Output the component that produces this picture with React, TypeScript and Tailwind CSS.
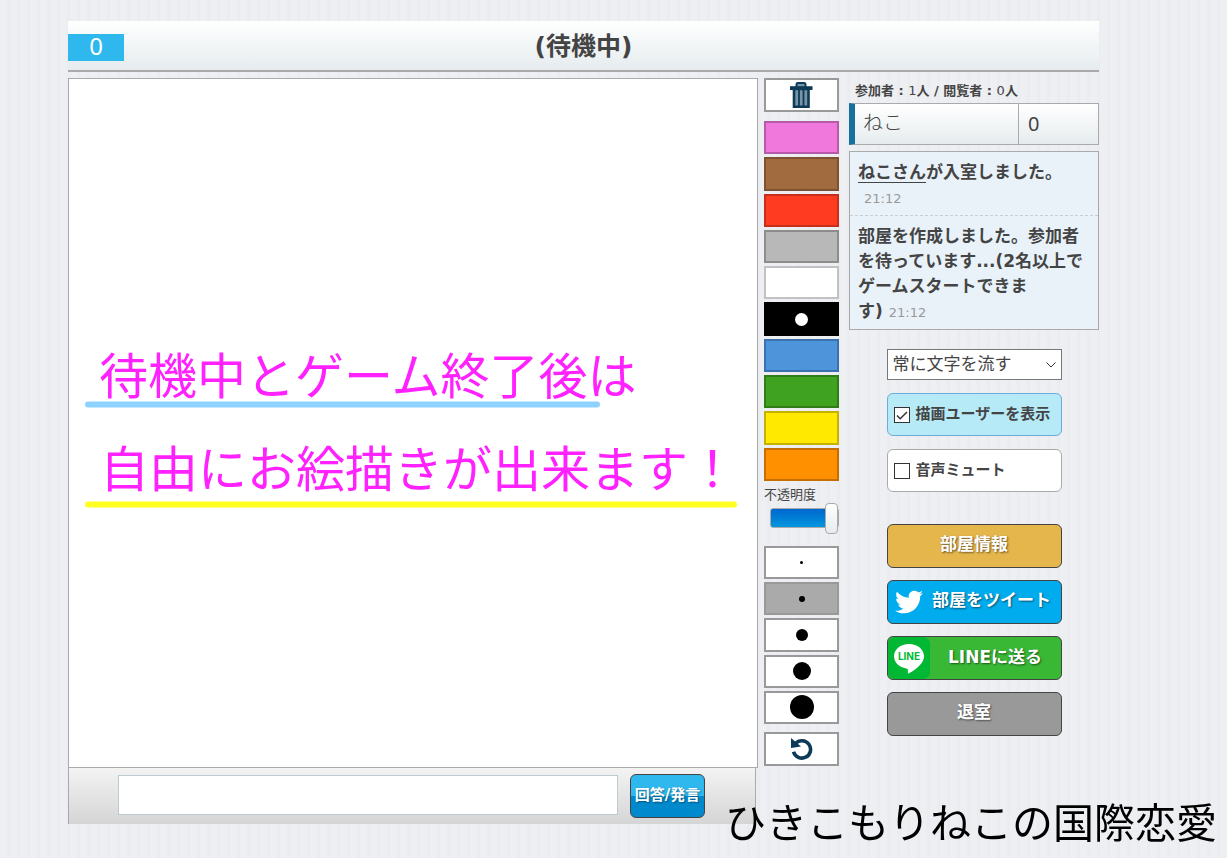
import { FaTwitter } from "react-icons/fa";

type Swatch = {
  label: string;
  className: string;
  selected?: boolean;
};

const swatches: Swatch[] = [
  { label: "ピンク", className: "border-[#b75aa8] bg-[#f078dc]" },
  { label: "茶", className: "border-[#7d5231] bg-[#a26b3f]" },
  { label: "赤", className: "border-[#c62f1b] bg-[#ff3c22]" },
  { label: "灰", className: "border-[#8d8d8d] bg-[#b8b8b8]" },
  { label: "白", className: "border-[#c2c2c2] bg-white" },
  { label: "黒", className: "border-black bg-black", selected: true },
  { label: "青", className: "border-[#3c71af] bg-[#4e94db]" },
  { label: "緑", className: "border-[#307d18] bg-[#3fa220]" },
  { label: "黄", className: "border-[#c4b200] bg-[#ffe900]" },
  { label: "橙", className: "border-[#c66f00] bg-[#ff9100]" },
];

const brushes = [
  { size: 3, dot: "size-[3px]", background: "bg-white" },
  { size: 6, dot: "size-[6px]", background: "bg-[#aaa]" },
  { size: 12, dot: "size-[12px]", background: "bg-white" },
  { size: 18, dot: "size-[18px]", background: "bg-white" },
  { size: 24, dot: "size-[24px]", background: "bg-white" },
];

export default function App() {
  return (
    <div className="min-h-screen bg-[repeating-linear-gradient(90deg,#eeeff3_0,#eeeff3_7px,#ebecf0_7px,#ebecf0_10px)] pt-[21px] pr-32 pl-[68px] font-['DejaVu_Sans','Noto_Sans_CJK_JP',sans-serif] text-[#444]">
      <header className="grid h-[51px] grid-cols-[1fr_auto_1fr] items-center border-b-2 border-[#aaa] bg-linear-to-b from-white to-[#e6ecee]">
        <span className="mt-1 flex h-[27px] w-14 items-center justify-center bg-[#2eb8ee] pb-1 font-['Noto_Sans',sans-serif] text-2xl text-white">0</span>
        <h1 className="pt-0.5 text-[25px] leading-[47px] font-bold">(待機中)</h1>
      </header>

      <main className="mt-1.5 flex items-start">
        <div className="min-w-0 flex-1">
          <DrawingCanvas />
          <AnswerForm />
        </div>
        <Toolbar />
        <Sidebar />
      </main>

      <p className="fixed right-2.5 bottom-2 font-['Noto_Sans_CJK_JP',sans-serif] text-[41px] leading-[60px] text-black">
        ひきこもりねこの国際恋愛
      </p>
    </div>
  );
}

function DrawingCanvas() {
  return (
    <section className="aspect-square border border-[#aaa] bg-white">
      <svg className="size-full" viewBox="0 0 688 688" role="img" aria-label="お絵描きキャンバス">
        <g fill="#ff22ff" fontFamily="Noto Sans CJK JP, sans-serif" fontSize="49">
          <text x="30" y="315">待機中とゲーム終了後は</text>
          <text x="31" y="408">自由にお絵描きが出来ます！</text>
        </g>
        <g strokeLinecap="round" strokeWidth="6">
          <path d="M19 325.500H528" stroke="#8ed3ff" />
          <path d="M19 425.500H665" stroke="#ffff22" />
        </g>
      </svg>
    </section>
  );
}

function AnswerForm() {
  return (
    <form
      className="mr-0.5 flex h-14 items-center border-x border-[#aaa] bg-linear-to-b from-[#f3f3f3] to-[#d5d5d5] pl-[49px]"
      onSubmit={(event) => event.preventDefault()}
    >
      <input
        aria-label="回答/発言"
        className="mr-3 mb-0.5 h-10 min-w-0 flex-1 border border-[#bccad2] bg-white px-2"
        type="text"
      />
      <button
        className="mr-[50px] h-11 w-[75px] rounded-md border border-[#444] bg-linear-to-b from-[#2eb8ee] from-50% to-[#008acd] to-50% pb-0.5 text-[15px] font-bold whitespace-nowrap text-white text-shadow-[1px_1px_2px_#0006]"
        type="submit"
      >
        回答/発言
      </button>
    </form>
  );
}

function Toolbar() {
  return (
    <div className="ml-1.5 flex w-[75px] shrink-0 flex-col">
      <button aria-label="全消し" className="flex h-[34px] items-center justify-center border-2 border-[#999] bg-white" type="button">
        <TrashIcon />
      </button>

      <div className="mt-[9px] flex h-[360px] flex-col gap-[3px]">
        {swatches.map((swatch) => (
          <button
            aria-label={swatch.label}
            className={`flex flex-1 items-center justify-center border-2 ${swatch.className}`}
            key={swatch.label}
            type="button"
          >
            {swatch.selected && <span className="size-[13px] rounded-full bg-white" />}
          </button>
        ))}
      </div>

      <label className="mt-1.5 block text-[13px] leading-4" htmlFor="opacity">不透明度</label>
      <input
        className="ml-1.5 h-[30px] w-[69px] appearance-none bg-transparent [&::-webkit-slider-runnable-track]:h-5 [&::-webkit-slider-runnable-track]:rounded-[3px] [&::-webkit-slider-runnable-track]:border [&::-webkit-slider-runnable-track]:border-[#aaa] [&::-webkit-slider-runnable-track]:bg-linear-to-b [&::-webkit-slider-runnable-track]:from-[#0066cf] [&::-webkit-slider-runnable-track]:to-[#0096dd] [&::-webkit-slider-thumb]:-mt-1.5 [&::-webkit-slider-thumb]:h-[31px] [&::-webkit-slider-thumb]:w-[13px] [&::-webkit-slider-thumb]:appearance-none [&::-webkit-slider-thumb]:rounded [&::-webkit-slider-thumb]:border [&::-webkit-slider-thumb]:border-[#aaa] [&::-webkit-slider-thumb]:bg-linear-to-b [&::-webkit-slider-thumb]:from-white [&::-webkit-slider-thumb]:to-[#e6ecee]"
        defaultValue={100}
        id="opacity"
        type="range"
      />

      <div className="mt-[13px] flex h-[178px] flex-col gap-[3px]">
        {brushes.map((brush) => (
          <button
            aria-label={`太さ ${brush.size}`}
            className={`flex flex-1 items-center justify-center border-2 border-[#999] ${brush.background}`}
            key={brush.size}
            type="button"
          >
            <span className={`rounded-full bg-black ${brush.dot}`} />
          </button>
        ))}
      </div>

      <button aria-label="元に戻す" className="mt-2 flex h-[34px] items-center justify-center border-2 border-[#999] bg-white" type="button">
        <UndoIcon />
      </button>
    </div>
  );
}

function Sidebar() {
  return (
    <aside className="ml-2.5 w-[250px] shrink-0">
      <p className="mt-0.5 mb-0.5 pl-1.5 text-[13px] leading-[21px] font-bold whitespace-nowrap">
        参加者 : <span className="font-normal">1</span>人 / 閲覧者 : <span className="font-normal">0</span>人
      </p>
      <table className="h-[42px] w-full table-fixed border-separate border-spacing-0 border border-l-[6px] border-[#aaa] border-l-[#17719c] bg-linear-to-b from-white to-[#e6ecee] font-['Noto_Sans','Noto_Sans_CJK_JP',sans-serif] text-xl">
        <tbody>
          <tr>
            <td className="pb-0.5 pl-2 leading-8 font-light">ねこ</td>
            <td className="w-20 border-l border-[#aaa] pl-[9px] leading-9">0</td>
          </tr>
        </tbody>
      </table>

      <ul className="mt-1.5 border border-[#aaa] bg-[#e9f2f9] text-[17px] leading-[25px] font-bold whitespace-nowrap">
        <li className="border-b border-dashed border-[#ccc] px-2 pt-2 pb-1">
          <span className="underline underline-offset-4">ねこさん</span>が入室しました。
          <br />
          <time className="pl-1.5 text-[13px] font-normal text-[#999]">21:12</time>
        </li>
        <li className="px-2 pt-2 pb-1">
          部屋を作成しました。参加者
          <br />
          を待っています...(2名以上で
          <br />
          ゲームスタートできま
          <br />
          す) <time className="text-[13px] font-normal text-[#999]">21:12</time>
        </li>
      </ul>

      <div className="mx-auto mt-[19px] flex w-[175px] flex-col">
        <div className="relative">
          <select
            aria-label="文字表示"
            className="h-[31px] w-full appearance-none border border-[#777] bg-white pr-6 pb-0.5 pl-[5px] text-[17px] leading-6"
            defaultValue="always"
          >
            <option value="always">常に文字を流す</option>
          </select>
          <svg aria-hidden="true" className="pointer-events-none absolute top-2.5 right-[5px] size-3" fill="none" stroke="#333" viewBox="0 0 12 12">
            <path d="m1.500 3.500 4.500 4.500 4.500-4.500" />
          </svg>
        </div>
        <CheckOption className="mt-[13px] border-[#6dabdc] bg-[#b6eaf7]" defaultChecked label="描画ユーザーを表示" />
        <CheckOption className="mt-[13px] border-[#aaa] bg-white" label="音声ミュート" />

        <div className="mt-8 flex flex-col gap-3 text-[17px] font-bold whitespace-nowrap text-white">
          <button className="h-11 rounded-md border border-[#444] bg-[#e4b64c] pb-0.5 text-shadow-[1px_1px_2px_#0008]" type="button">
            部屋情報
          </button>
          <button className="flex h-11 items-center rounded-md border border-[#444] bg-[#00acee] text-shadow-[1px_1px_2px_#0008]" type="button">
            <FaTwitter aria-hidden="true" className="ml-[7px] size-7 shrink-0" />
            <span className="flex-1 pb-0.5">部屋をツイート</span>
          </button>
          <button className="flex h-11 items-center overflow-hidden rounded-md border border-[#444] bg-[#39b835] text-shadow-[1px_1px_2px_#0008]" type="button">
            <LineLogo />
            <span className="flex-1">LINEに送る</span>
          </button>
          <button className="h-11 rounded-md border border-[#444] bg-[#999] pb-0.5 text-shadow-[1px_1px_2px_#0008]" type="button">
            退室
          </button>
        </div>
      </div>
    </aside>
  );
}

type CheckOptionProps = {
  className: string;
  defaultChecked?: boolean;
  label: string;
};

function CheckOption({ className, defaultChecked, label }: CheckOptionProps) {
  return (
    <label className={`flex h-[43px] items-center rounded-md border pl-1.5 text-[15px] font-bold ${className}`}>
      <input className="peer size-4 shrink-0 appearance-none border border-[#333] bg-white" defaultChecked={defaultChecked} type="checkbox" />
      <svg aria-hidden="true" className="invisible -ml-4 size-4 shrink-0 peer-checked:visible" fill="none" stroke="#333" strokeWidth="1.500" viewBox="0 0 16 16">
        <path d="m3 8.500 3.200 3.200L13 5" />
      </svg>
      <span className="ml-1.5 whitespace-nowrap">{label}</span>
    </label>
  );
}

function TrashIcon() {
  return (
    <svg aria-hidden="true" className="h-7 w-6" viewBox="0 0 24 28">
      <path d="M6.500 6V3.500Q6.500 2 8 2h6q1.500 0 1.500 1.500V6" fill="#7894a5" stroke="#0d3b57" strokeWidth="2" />
      <path d="M4 8h14.500v17.800H4z" fill="#7894a5" stroke="#0d3b57" strokeWidth="2.600" />
      <path d="M0 5.200h22.500v3.800H0z" fill="#0d3b57" />
      <path d="M9 9v16M13.500 9v16" stroke="#0d3b57" strokeWidth="1.800" />
    </svg>
  );
}

function UndoIcon() {
  return (
    <svg aria-hidden="true" className="size-6" viewBox="0 0 24 24">
      <path d="M5.500 6.500A8.700 8.700 0 1 1 3.500 14.800" fill="none" stroke="#0d3b57" strokeWidth="3.600" />
      <path d="M1 1v10l10-1.500z" fill="#0d3b57" />
    </svg>
  );
}

function LineLogo() {
  return (
    <svg aria-hidden="true" className="size-[42px] shrink-0 text-shadow-none" viewBox="0 0 42 42">
      <rect fill="#00b833" height="42" rx="7" width="42" />
      <path d="M21 7C12.500 7 6 12.500 6 19.300c0 6.100 5.200 11.100 12.300 12.100 2 .4 1.800 1.200 1.500 4 0 .9.400 1.300 1.400.8C24.500 34.700 36 27.500 36 19.300 36 12.500 29.500 7 21 7Z" fill="#fff" />
      <text fill="#00b833" fontFamily="Inter, sans-serif" fontSize="10" fontWeight="700" textAnchor="middle" x="21" y="23">
        LINE
      </text>
    </svg>
  );
}
